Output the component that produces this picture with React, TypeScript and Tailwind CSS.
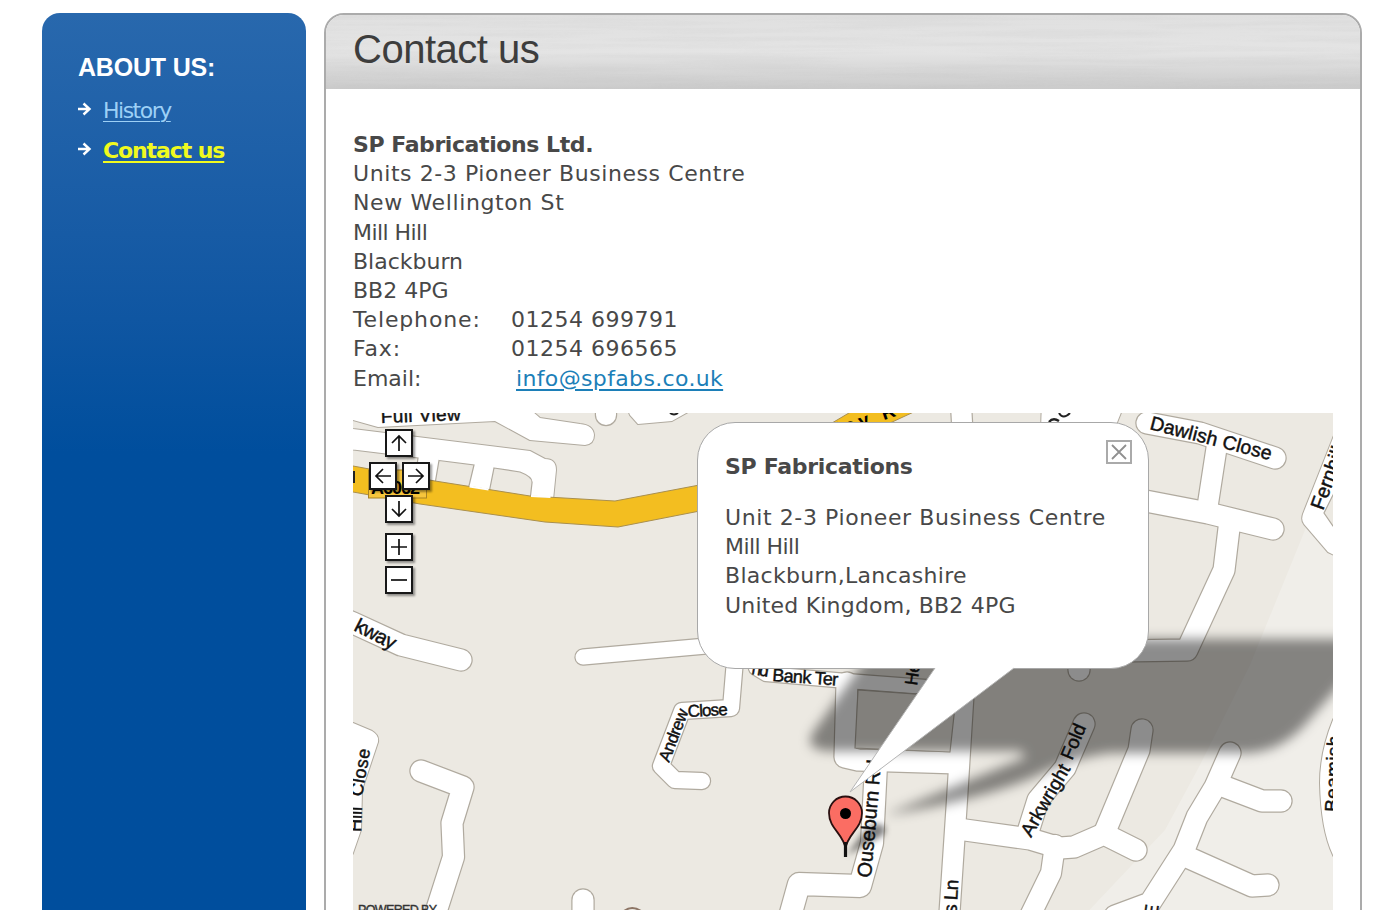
import type { ReactNode } from "react";

type Road = { d: string; w: number };

const roads: Road[] = [
  { d: "M330 613L353 623L401 645L461 660", w: 21 },
  { d: "M583 657L740 643", w: 15 },
  { d: "M735 660L731 708L682 711L661 766L675 780L702 781", w: 16 },
  { d: "M421 771L463 787L452 823L453.5 857L434 918", w: 21 },
  { d: "M583 900V930", w: 21 },
  { d: "M606 400V415", w: 20 },
  { d: "M961 405L963 440", w: 20 },
  { d: "M847 683L845 757L858 760L958 763", w: 21 },
  { d: "M756 668L766 674L847 681L966 690", w: 14 },
  { d: "M966 655L957 800L949 920", w: 20 },
  { d: "M876 765L872 843L860 886L799 884L789 920", w: 22 },
  { d: "M958 829L1030 839L1060 848L1074 847L1104 834L1136 850", w: 21 },
  { d: "M1055 845L1051 873L1028 920", w: 20 },
  { d: "M1104 834L1139 750L1142 730", w: 21 },
  { d: "M1084 724L1065 768L1038 800L1027 835", w: 21 },
  { d: "M1230 753L1215 787L1197 817L1184 850L1150 903L1115 916", w: 21 },
  { d: "M1220 785L1262 801L1281 801", w: 21 },
  { d: "M1187 857L1252 886L1268 885", w: 21 },
  { d: "M1147 423L1200 433L1275 458", w: 21 },
  { d: "M1217 445L1207 510", w: 20 },
  { d: "M1130 498L1208 513L1273 529", w: 21 },
  { d: "M1230 520L1224 570L1187 650L1120 651", w: 21 },
  { d: "M1079 650V670", w: 21 },
];

const areas = [
  "M340 405L353 420L378 427L495 421L530 440L585 445Q594 444 594 435Q593 425 580 424L540 418L525 405Z",
  "M340 427L353 429L530 451L545 459Q556 459 556 470L552 510L340 475Z",
  "M624 400L630 415L638 424L672 421L695 408Z",
  "M340 718L353 723L372 731Q379 735 378 742L362 790L361 830L353 853L340 880Z",
  "M1340 422L1333 438L1303 514Q1301 520 1304 524L1328 552L1340 558Z",
  "M1340 705L1333 720Q1320 752 1320 783Q1321 830 1333 855L1340 870Z",
  "M1042 400L1041 430H1114L1126 400Z",
];

const islands = [
  "M340 448L353 450L418 458L415 480L340 470Z",
  "M439 460.5L474 465L468 490L435 484Z",
  "M494 468L520 472Q533 477 532 483L530 500L489 493Z",
  "M858 690L956 697L950 752L855 748Z",
  "M1340 478L1333 495L1324 513L1333 526L1340 532Z",
];

type Label = { text: string; x: number; y: number; rotate: number; size: number; length?: number };

const labels: Label[] = [
  { text: "Full View", x: 381, y: 423, rotate: -2, size: 19, length: 80 },
  { text: "kway", x: 353, y: 630, rotate: 27, size: 20, length: 44 },
  { text: "Andrew", x: 669, y: 763, rotate: -69, size: 17, length: 55 },
  { text: "Close", x: 688, y: 717, rotate: -3, size: 17, length: 40 },
  { text: "Hill", x: 361, y: 832, rotate: -88, size: 18 },
  { text: "Close", x: 362, y: 797, rotate: -80, size: 18, length: 48 },
  { text: "nd", x: 751, y: 674, rotate: 10, size: 17, length: 17 },
  { text: "Bank Ter", x: 772, y: 681, rotate: 4, size: 18, length: 66 },
  { text: "He", x: 917, y: 686, rotate: -82, size: 18 },
  { text: "Ouseburn Rd", x: 871, y: 878, rotate: -85, size: 20, length: 118 },
  { text: "ns Ln", x: 956, y: 924, rotate: -87, size: 19, length: 44 },
  { text: "Dawlish Close", x: 1149, y: 429, rotate: 14.5, size: 19.5, length: 125 },
  { text: "Arkwright", x: 1031, y: 838, rotate: -60, size: 19, length: 80 },
  { text: "Fold", x: 1072, y: 761, rotate: -67, size: 19, length: 37 },
  { text: "Fernhill", x: 1323, y: 511, rotate: -70, size: 20 },
  { text: "Beamish", x: 1338, y: 812, rotate: -88, size: 19, length: 76 },
  { text: "E", x: 1157, y: 918, rotate: -82, size: 19 },
];

const details = [
  { label: "Telephone:", value: "01254 699791" },
  { label: "Fax:", value: "01254 696565" },
];

function Sidebar() {
  return (
    <aside className="h-[897px] w-[264px] shrink-0 rounded-t-[18px] bg-linear-to-b from-[#2868ad] to-[#004e9d] to-[440px] pt-[37px] pl-9">
      <h2 className="font-['Liberation_Sans'] text-[25px] leading-[34px] font-bold tracking-[-0.2px] text-white">ABOUT US:</h2>
      <ul className="mt-[7px] text-[22px] leading-10">
        <li className="flex items-center">
          <SideArrow />
          <a href="#" className="tracking-[-1.5px] text-[#9dd0f6] underline decoration-1 underline-offset-[3px]">History</a>
        </li>
        <li className="flex items-center">
          <SideArrow />
          <a href="#" className="font-bold tracking-[-1.1px] text-[#f0fa1e] underline decoration-2 underline-offset-[3px]">Contact us</a>
        </li>
      </ul>
    </aside>
  );
}

function SideArrow() {
  return (
    <svg viewBox="0 0 14 16" className="mr-[11px] mb-1 h-4 w-3.5" fill="none" stroke="#fff" strokeWidth="2.4">
      <path d="M0 8H11.5M5.5 2.5L11.5 8L5.5 13.5" />
    </svg>
  );
}

function PanelHeader() {
  return (
    <div className="relative h-[74px] overflow-hidden bg-linear-to-b from-[#e0e0e0] via-[#e4e4e4] to-[#cbcbcb]">
      <svg className="absolute inset-0 h-full w-full opacity-[0.07]">
        <filter id="brushed">
          <feTurbulence type="fractalNoise" baseFrequency="0.006 0.18" numOctaves="3" seed="4" />
          <feColorMatrix values="0 0 0 0 0.4  0 0 0 0 0.4  0 0 0 0 0.4  2.6 0 0 0 -1" />
        </filter>
        <rect width="100%" height="100%" filter="url(#brushed)" />
      </svg>
      <h1 className="relative pt-2.5 pl-[27px] font-['Liberation_Sans'] text-[40px] leading-[48px] tracking-[-0.5px] text-[#3d3d3d]">Contact us</h1>
    </div>
  );
}

function MapButton({ children, className }: { children: ReactNode; className: string }) {
  return (
    <button className={`absolute h-7 w-7 border-2 border-[#181818] bg-white shadow-[2px_2px_2px_rgba(0,0,0,0.4)] ${className}`}>
      <svg viewBox="0 0 24 24" className="h-6 w-6" fill="none" stroke="#111" strokeWidth="1.7">
        {children}
      </svg>
    </button>
  );
}

function MapDrawing() {
  return (
    <svg viewBox="353 413 980 497" className="absolute inset-0 h-[497px] w-[980px]" fontFamily="Liberation Sans, sans-serif">
      <defs>
        <filter id="soft" x="-20%" y="-30%" width="140%" height="160%">
          <feGaussianBlur stdDeviation="6" />
        </filter>
        <filter id="softSmall" x="-40%" y="-60%" width="180%" height="220%">
          <feGaussianBlur stdDeviation="3" />
        </filter>
      </defs>
      <rect x="353" y="413" width="980" height="497" fill="#ece9e2" />
      <path d="M1340 440L1303 535L1250 665L1200 765L1165 830L1080 920H1340Z" fill="#f0eee9" />

      <g fill="none" stroke="#b0aa9f" strokeLinecap="round" strokeLinejoin="round">
        {areas.map((d) => <path key={d} d={d} strokeWidth="2" />)}
        {roads.map((road) => <path key={road.d} d={road.d} strokeWidth={road.w + 2.4} />)}
      </g>
      <g fill="none" stroke="#fff" strokeLinecap="round" strokeLinejoin="round">
        {areas.map((d) => <path key={d} d={d} fill="#fff" stroke="none" />)}
        {roads.map((road) => <path key={road.d} d={road.d} strokeWidth={road.w} />)}
      </g>
      <g fill="#ece9e2" stroke="#b0aa9f" strokeWidth="1.2">
        {islands.map((d) => <path key={d} d={d} />)}
      </g>

      <path d="M340 464L353 466L435 481L530 496L615 501L710 483V509L618 527L545 522L420 504L353 492L340 490Z" fill="#f3be20" stroke="#a98f4e" />
      <path d="M469.5 486.5L488.5 489.5M531 496L550.5 497" stroke="#fff" strokeWidth="2" />
      <path d="M832 423L854 410H918L890 423Z" fill="#f3be20" stroke="#a98f4e" />
      <rect x="368.5" y="470" width="58" height="28" fill="#f6c53c" stroke="#a98323" />
      <text x="371" y="494" fontSize="18" fontWeight="700" textLength="49">A6062</text>
      <path d="M354 471V483" stroke="#222" strokeWidth="2" />
      <text transform="translate(838 436) rotate(-19)" fontSize="19" fontWeight="700" textLength="62">ley R</text>
      <path d="M670 413Q674 416 678 413M1059 413Q1063 420 1070 413" fill="none" stroke="#222" strokeWidth="2" />
      <path d="M1049 422Q1053 417 1059 421" fill="none" stroke="#222" strokeWidth="2.4" />

      <g fill="#111" stroke="#111" strokeWidth="0.45">
        {labels.map((label) => (
          <text key={`${label.text}${label.x}`} transform={`translate(${label.x} ${label.y}) rotate(${label.rotate})`} fontSize={label.size} textLength={label.length}>
            {label.text}
          </text>
        ))}
      </g>
      <text x="358" y="914" fontSize="12.5" textLength="79" fill="#333" stroke="#333" strokeWidth="0.4">POWERED BY</text>
      <path d="M624 911Q632 905 641 911" fill="none" stroke="#8d7565" strokeWidth="2" />

      <path
        d="M880 639H1390V628L1302 728Q1278 751 1250 753H1110Q1070 758 1034 777Q980 800 885 815Q960 784 1026 757L1020 751H828Q802 749 814 731Z"
        fill="#000"
        fillOpacity="0.45"
        filter="url(#soft)"
      />
      <path d="M847 855L863 833Q874 820 884 826Q889 834 874 840Z" fill="#000" fillOpacity="0.5" filter="url(#softSmall)" />
      <path d="M845.5 857V849C844 834 829 829 829 813A16.5 16.5 0 0 1 862 813C862 829 847 834 845.5 849Z" fill="#fb6d63" stroke="#2a1010" strokeWidth="1.8" />
      <path d="M845.5 842V857" stroke="#111" strokeWidth="3.2" />
      <circle cx="845.5" cy="813.5" r="5.5" fill="#000" />
    </svg>
  );
}

function InfoBubble() {
  return (
    <div className="absolute top-[9px] left-[344px] h-[247px] w-[452px] rounded-[38px] border-[1.5px] border-[#a8a8a8] bg-white px-[27px] pt-[29px]">
      <svg viewBox="0 0 170 132" className="absolute top-[243px] left-[150px] h-[132px] w-[170px]">
        <path d="M87 2L2 126L166 2Z" fill="#fff" />
        <path d="M87 2L2 126L166 2" fill="none" stroke="#b5b5b5" />
      </svg>
      <p className="font-bold tracking-[-0.3px]">SP Fabrications</p>
      <div className="mt-[22px] whitespace-nowrap">
        <p className="tracking-[0.6px]">Unit 2-3 Pioneer Business Centre</p>
        <p className="tracking-[-0.55px]">Mill Hill</p>
        <p className="tracking-[0.3px]">Blackburn,Lancashire</p>
        <p className="tracking-[0.2px]">United Kingdom, BB2 4PG</p>
      </div>
      <button className="absolute top-[17px] right-4 h-6 w-[26px] border-2 border-[#aaa] bg-white">
        <svg viewBox="0 0 22 20" className="h-5 w-[22px]" stroke="#909090" strokeWidth="1.8">
          <path d="M4 3L18 17M18 3L4 17" />
        </svg>
      </button>
    </div>
  );
}

function ContactMap() {
  return (
    <div className="relative mt-5 h-[497px] w-[980px] overflow-hidden">
      <MapDrawing />
      <MapButton className="top-[16px] left-[32px]"><path d="M12 20V5M5 12L12 5L19 12" /></MapButton>
      <MapButton className="top-[49px] left-[16px]"><path d="M20 12H5M12 5L5 12L12 19" /></MapButton>
      <MapButton className="top-[49px] left-[49px]"><path d="M4 12H19M12 5L19 12L12 19" /></MapButton>
      <MapButton className="top-[82px] left-[32px]"><path d="M12 4V19M5 12L12 19L19 12" /></MapButton>
      <MapButton className="top-[120px] left-[32px]"><path d="M12 4V20M4 12H20" /></MapButton>
      <MapButton className="top-[153px] left-[32px]"><path d="M4 12H20" /></MapButton>
      <InfoBubble />
    </div>
  );
}

export default function App() {
  return (
    <div className="flex h-[910px] w-[1400px] gap-[18px] overflow-hidden bg-white pt-[13px] pl-[42px] font-['DejaVu_Sans',sans-serif] text-[22px] leading-[29.2px] text-[#484848]">
      <Sidebar />
      <main className="h-[930px] w-[1038px] shrink-0 overflow-hidden rounded-t-[20px] border-2 border-[#ababab]">
        <PanelHeader />
        <div className="pt-[41px] pl-[27px]">
          <p className="font-bold tracking-[-0.42px]">SP Fabrications Ltd.</p>
          <p className="tracking-[0.58px]">Units 2-3 Pioneer Business Centre</p>
          <p className="tracking-[0.62px]">New Wellington St</p>
          <p className="tracking-[-0.55px]">Mill Hill</p>
          <p>Blackburn</p>
          <p>BB2 4PG</p>
          {details.map((item) => (
            <div key={item.label} className="flex">
              <span className="w-[158px] tracking-[0.85px]">{item.label}</span>
              <span className="tracking-[0.5px]">{item.value}</span>
            </div>
          ))}
          <div className="flex">
            <span className="w-[163px]">Email:</span>
            <a href="#" className="tracking-[0.35px] text-[#1c7fb8] underline decoration-2 underline-offset-[3px]">info@spfabs.co.uk</a>
          </div>
          <ContactMap />
        </div>
      </main>
    </div>
  );
}
